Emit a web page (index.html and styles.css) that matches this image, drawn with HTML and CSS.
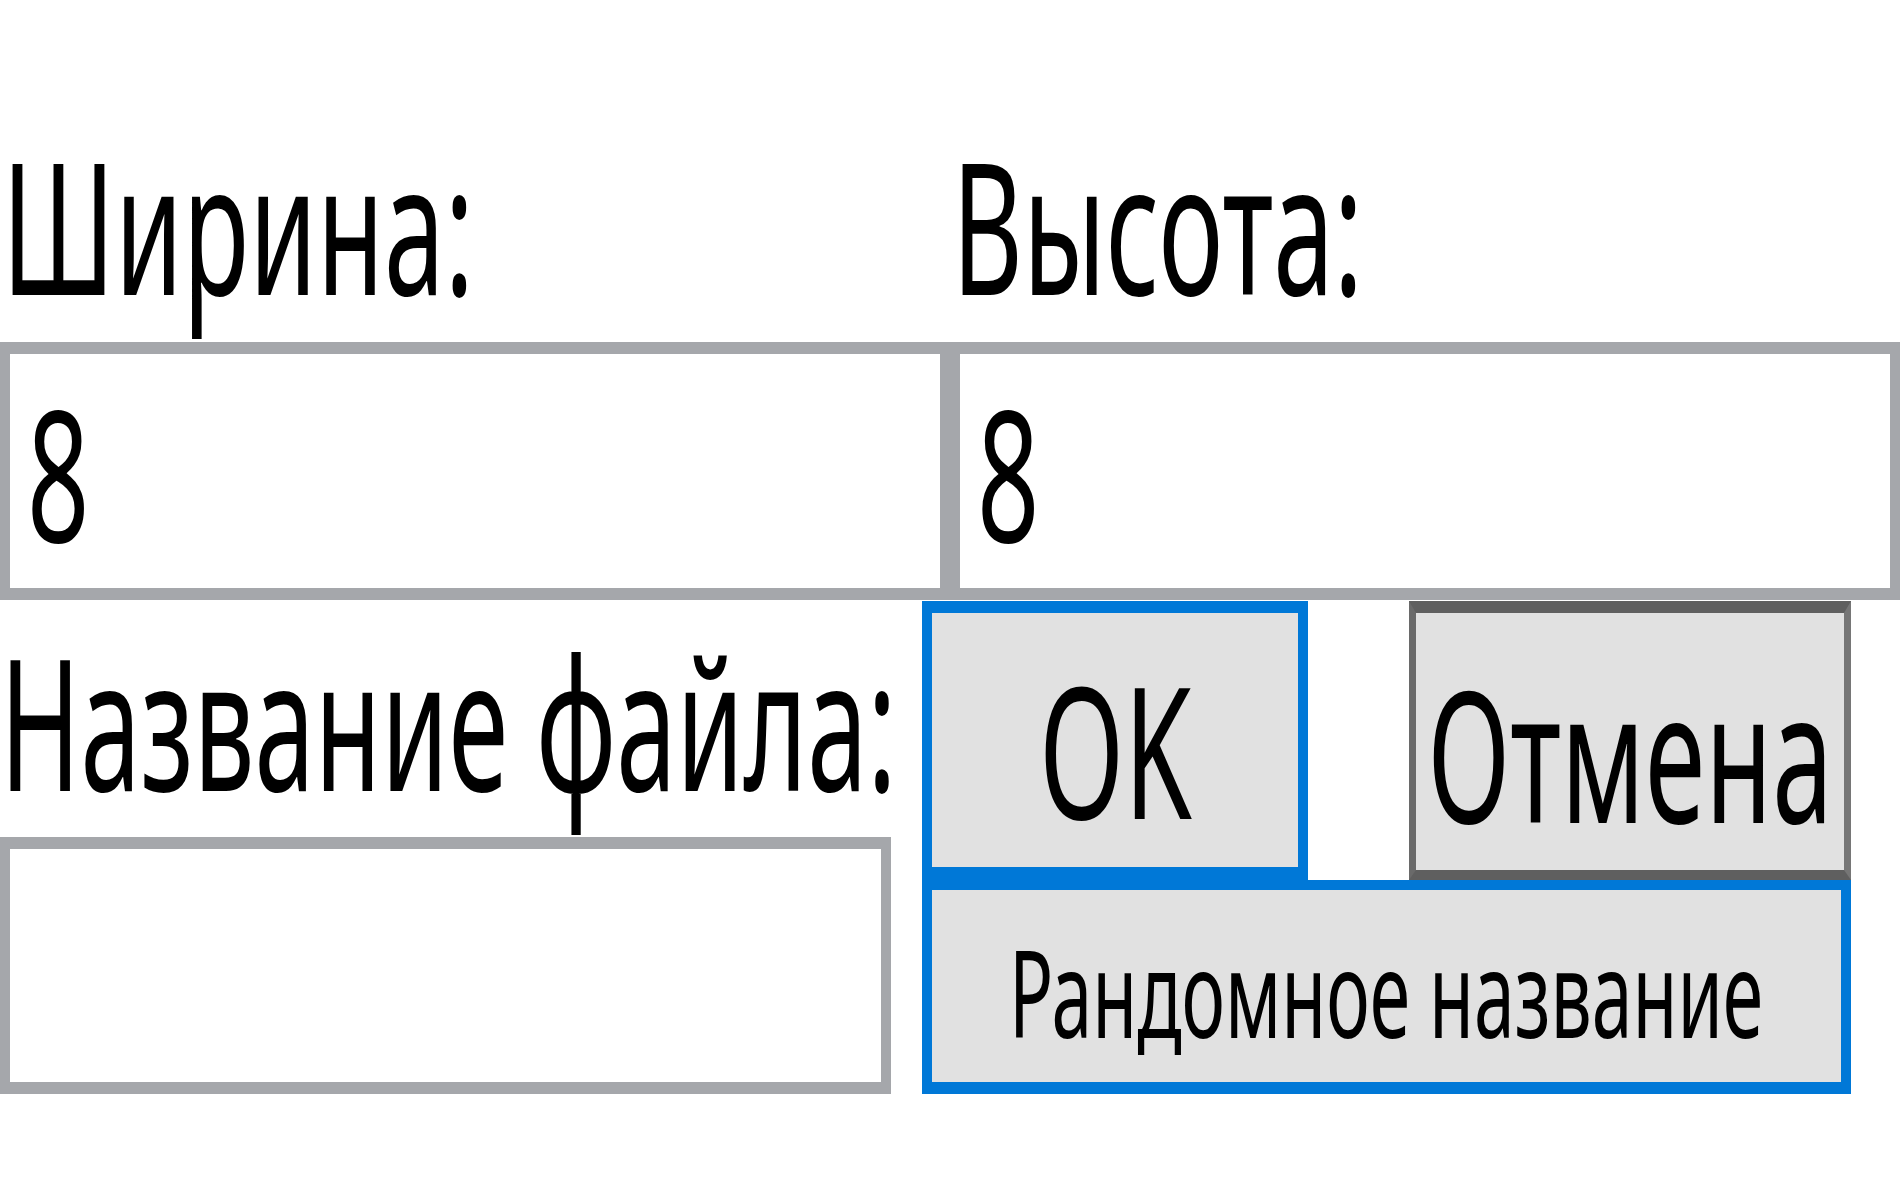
FILE: index.html
```html
<!DOCTYPE html>
<html lang="ru">
<head>
<meta charset="utf-8">
<title>Новое изображение</title>
<link rel="stylesheet" href="styles.css">
</head>
<body>
<div class="dialog">
  <div class="top">
    <div class="col">
      <label class="label"><span class="txt">Ширина:</span></label>
      <div class="field"><span class="txt">8</span></div>
    </div>
    <div class="col">
      <label class="label"><span class="txt">Высота:</span></label>
      <div class="field"><span class="txt">8</span></div>
    </div>
  </div>
  <div class="bottom">
    <div class="name-col">
      <label class="label"><span class="txt">Название файла:</span></label>
      <div class="field field-name"></div>
    </div>
    <div class="actions">
      <div class="btn-row">
        <button class="btn btn-primary btn-ok"><span class="txt">OK</span></button>
        <button class="btn btn-cancel"><span class="txt">Отмена</span></button>
      </div>
      <button class="btn btn-primary btn-random"><span class="txt">Рандомное название</span></button>
    </div>
  </div>
</div>
</body>
</html>
```

FILE: styles.css
```css
* {
  box-sizing: border-box;
  margin: 0;
}

html,
body {
  background: #ffffff;
}

body {
  margin: 0;
  width: 1900px;
  height: 1200px;
  overflow: hidden;
  font-family: "Noto Sans", "Open Sans", sans-serif;
  color: #000000;
}

.txt {
  display: inline-block;
  transform: scaleX(0.6);
  transform-origin: 0 50%;
  white-space: nowrap;
}

.top {
  display: grid;
  grid-template-columns: 950px 950px;
  padding-top: 133px;
}

.label {
  display: block;
  font-size: 182px;
  line-height: 182px;
  height: 182px;
  padding-left: 2px;
}

.col .label {
  margin-bottom: 27px;
}

.field {
  height: 258px;
  border: 12px solid #a5a7ab;
  border-left-width: 10px;
  border-right-width: 10px;
  background: #ffffff;
  display: flex;
  align-items: center;
  padding-left: 17px;
  font-size: 182px;
  line-height: normal;
}

.bottom {
  display: flex;
  gap: 31px;
}

.name-col {
  width: 891px;
  padding-top: 29px;
}

.name-col .label {
  margin-bottom: 26px;
  padding-left: 0;
}

.name-col .label .txt {
  transform: scaleX(0.595);
}

.field-name {
  height: 257px;
}

.actions {
  width: 929px;
  padding-top: 1px;
  display: flex;
  flex-direction: column;
}

.btn-row {
  display: flex;
  justify-content: space-between;
  height: 279px;
}

.btn {
  font-family: inherit;
  font-size: 182px;
  line-height: normal;
  color: #000000;
  background: #e1e1e1;
  border: 10px solid #0078d7;
  border-top-width: 12px;
  border-bottom-width: 13px;
  padding: 16px 0 0;
  display: flex;
  align-items: center;
  justify-content: center;
  overflow: visible;
}

.btn .txt {
  transform-origin: 50% 50%;
}

.btn-ok {
  width: 386px;
}

.btn-cancel {
  width: 442px;
  border-color: #5f5f5f;
  border-left-width: 7px;
  border-right-width: 7px;
  border-left-color: #6a6a6a;
  border-right-color: #767676;
  border-top-width: 12px;
  border-bottom-width: 10px;
  padding-top: 20px;
}

.btn-random {
  width: 929px;
  height: 214px;
  font-size: 120px;
  border-top-width: 10px;
  border-bottom-width: 12px;
  padding-top: 11px;
}

.btn-random .txt {
  transform: scaleX(0.61);
}
```
